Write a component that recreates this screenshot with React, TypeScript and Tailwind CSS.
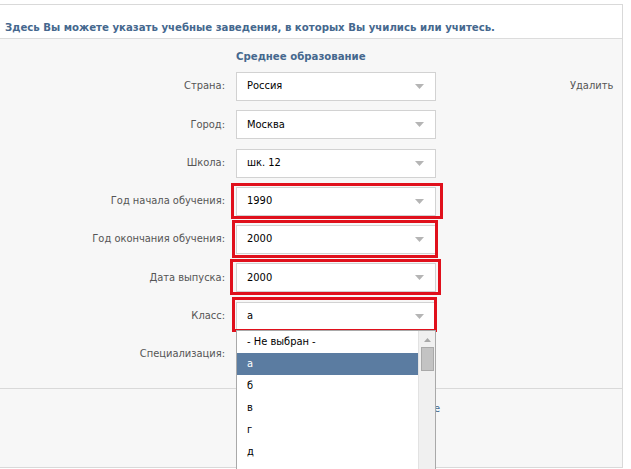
import React from "react";

const rows: { label: string; value: string }[] = [
  { label: "Страна:", value: "Россия" },
  { label: "Город:", value: "Москва" },
  { label: "Школа:", value: "шк. 12" },
  { label: "Год начала обучения:", value: "1990" },
  { label: "Год окончания обучения:", value: "2000" },
  { label: "Дата выпуска:", value: "2000" },
  { label: "Класс:", value: "а" },
  { label: "Специализация:", value: "" },
];

const options = ["- Не выбран -", "а", "б", "в", "г", "д"];

function Arrow() {
  return (
    <svg width="9" height="5" viewBox="0 0 9 5" className="shrink-0">
      <path d="M0 0 H9 L4.5 5 Z" fill="#b5b5b5" />
    </svg>
  );
}

function Select({ value }: { value: string }) {
  return (
    <div className="w-[200px] h-[29px] bg-white border border-[#d2d2d2] flex items-center pl-[10px] pr-[11px] text-black">
      <span className="flex-1">{value}</span>
      <Arrow />
    </div>
  );
}

export default function App() {
  return (
    <div className="w-[631px] h-[469px] bg-white overflow-hidden relative font-['DejaVu_Sans_Condensed','DejaVu_Sans',sans-serif] font-stretch-condensed text-[11px]">
      <div className="mt-[4px] w-[623px] h-[464px] border-t border-r border-b border-[#d9d9d9] flex flex-col">
        <div className="h-[34px] bg-white border-b border-[#dcdcdc] flex items-end pl-[5px] pb-[1px] font-bold text-[11.3px] text-[#45688e]">
          Здесь Вы можете указать учебные заведения, в которых Вы учились или учитесь.
        </div>
        <div className="bg-[#f7f7f7] flex-1 flex flex-col">
          <div className="relative border-b border-[#d9d9d9] pb-[19px]">
            <div className="pl-[236px] pt-[10px] h-[33px] font-bold text-[11.3px] text-[#45688e]">
              Среднее образование
            </div>
            <div className="flex flex-col gap-[9.3px]">
              {rows.map((r, i) => (
                <div key={r.label} className="flex items-center h-[29px]">
                  <div className="w-[225px] text-right text-[#555]">{r.label}</div>
                  <div className="ml-[11px]">
                    <Select value={r.value} />
                  </div>
                  {i === 0 && <div className="ml-[134px] text-[#555]">Удалить</div>}
                </div>
              ))}
            </div>

            {/* annotation frames */}
            <div className="absolute left-[231px] top-[144px] w-[212px] h-[36px] border-[3px] border-[#e0101c]" />
            <div className="absolute left-[232px] top-[181px] w-[206px] h-[38px] border-[3px] border-[#e0101c]" />
            <div className="absolute left-[230px] top-[220px] w-[211px] h-[36px] border-[3px] border-[#e0101c]" />
            <div className="absolute left-[232px] top-[258px] w-[205px] h-[35px] border-[3px] border-[#e0101c]" />
          </div>
          <div className="flex-1 relative">
            <div className="absolute right-[182px] top-[12px] text-[#45688e]">Добавить среднее образование</div>
          </div>
        </div>
      </div>

      {/* open dropdown */}
      <div className="absolute left-[236px] top-[330px] w-[200px] h-[150px] bg-white border border-[#a9a9a9] flex text-black">
        <div className="flex-1 flex flex-col">
          {options.map((o, i) => (
            <div
              key={o}
              className={
                i === 1
                  ? "h-[22px] flex items-center pl-[10px] bg-[#5b7ca1] text-white"
                  : "h-[22px] flex items-center pl-[10px]"
              }
            >
              {o}
            </div>
          ))}
        </div>
        <div className="w-[17px] bg-[#f0f0f0] border-l border-[#e2e2e2] flex flex-col items-center pt-[7px]">
          <svg width="7" height="4" viewBox="0 0 7 4">
            <path d="M0 4 L3.5 0 L7 4 Z" fill="#a8a8a8" />
          </svg>
          <div className="mt-[5px] w-[13px] h-[24px] bg-[#c3c3c3] border border-[#a9a9a9]" />
        </div>
      </div>
    </div>
  );
}
